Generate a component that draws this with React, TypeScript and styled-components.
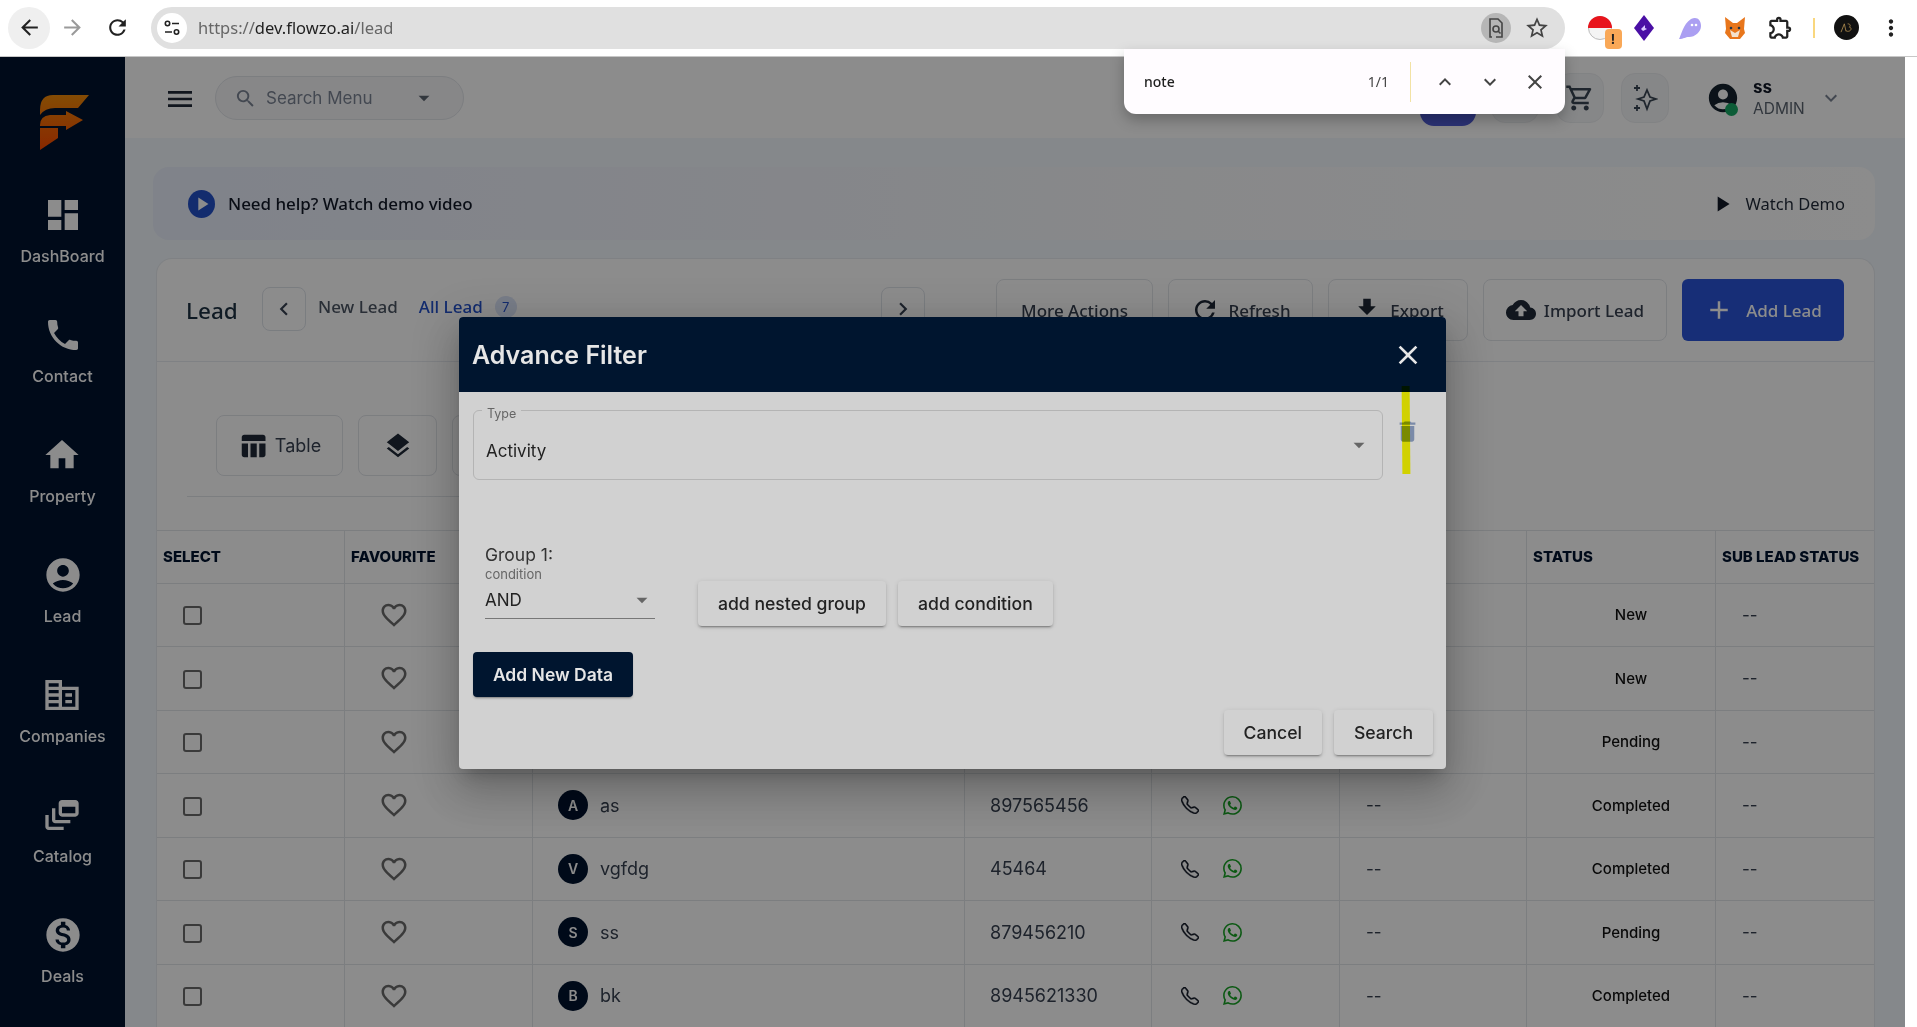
import React from "react";
import styled, { createGlobalStyle } from "styled-components";
import {
  MdAccountCircle,
  MdAdd,
  MdArrowBack,
  MdArrowDropDown,
  MdArrowForward,
  MdChevronLeft,
  MdChevronRight,
  MdClose,
  MdCloudUpload,
  MdDashboard,
  MdDelete,
  MdDynamicFeed,
  MdExpandLess,
  MdExpandMore,
  MdFavoriteBorder,
  MdFileDownload,
  MdHome,
  MdLayers,
  MdMenu,
  MdMonetizationOn,
  MdMoreVert,
  MdOutlineExtension,
  MdOutlineShoppingCart,
  MdOutlineStarBorder,
  MdPhone,
  MdPlayArrow,
  MdRefresh,
  MdSearch,
  MdTableChart,
} from "react-icons/md";
import { BsTelephone, BsWhatsapp } from "react-icons/bs";

const Global = createGlobalStyle`
  html, body {
    margin: 0;
    padding: 0;
    overflow: hidden;
    background: #fff;
  }
  * { box-sizing: border-box; }
`;

const CompanyIcon = () => (
  <svg width="1em" height="1em" viewBox="0 0 24 24" fill="currentColor">
    <path d="M12 7V3H2v18h20V7H12zM10 19H4v-2h6v2zm0-4H4v-2h6v2zm0-4H4V9h6v2zm0-4H4V5h6v2zm10 12h-8V9h8v10zm-2-8h-4v2h4v-2zm0 4h-4v2h4v-2z" />
  </svg>
);

const navItems = [
  { label: "DashBoard", icon: <MdDashboard /> },
  { label: "Contact", icon: <MdPhone /> },
  { label: "Property", icon: <MdHome /> },
  { label: "Lead", icon: <MdAccountCircle /> },
  { label: "Companies", icon: <CompanyIcon /> },
  { label: "Catalog", icon: <MdDynamicFeed /> },
  { label: "Deals", icon: <MdMonetizationOn /> },
];

const leads = [
  { status: "New" },
  { status: "New" },
  { status: "Pending" },
  { initial: "A", name: "as", phone: "897565456", status: "Completed" },
  { initial: "V", name: "vgfdg", phone: "45464", status: "Completed" },
  { initial: "S", name: "ss", phone: "879456210", status: "Pending" },
  { initial: "B", name: "bk", phone: "8945621330", status: "Completed" },
];

const Logo = () => (
  <svg width="49" height="55" viewBox="0 0 49 55">
    <defs>
      <linearGradient id="logoFill" x1="0" y1="0" x2="0" y2="1">
        <stop offset="0" stopColor="#f08a08" />
        <stop offset="1" stopColor="#fb4a00" />
      </linearGradient>
    </defs>
    <path
      fill="url(#logoFill)"
      d="M0 15Q0 0 13 0H49L38 13H15Q5 13 0 20ZM0 30Q0 21 10 20H26V16L43 25L26 35V31H0ZM0 33H18V43L0 55Z"
    />
  </svg>
);

const App: React.FC = () => {
  return (
    <Root>
      <Global />
      <Chrome>
        <BackButton>
          <MdArrowBack />
        </BackButton>
        <NavIcon $muted>
          <MdArrowForward />
        </NavIcon>
        <NavIcon>
          <MdRefresh />
        </NavIcon>
        <AddressBar>
          <SiteInfo>
            <svg width="18" height="18" viewBox="0 0 18 18" fill="none" stroke="#222" strokeWidth="1.6">
              <circle cx="4.5" cy="4.5" r="2.2" />
              <path d="M9 4.5h7M2 13h7" />
              <circle cx="13.5" cy="13" r="2.2" />
            </svg>
          </SiteInfo>
          <Url>
            https://<b>dev.flowzo.ai</b>/lead
          </Url>
          <LensButton>
            <svg width="20" height="22" viewBox="0 0 20 22" fill="none" stroke="#444" strokeWidth="1.6">
              <path d="M6 20H4V2h8l4 4v14H10" />
              <circle cx="10" cy="12" r="3" />
              <path d="M12 14l2.5 2.5" />
            </svg>
          </LensButton>
          <StarIcon>
            <MdOutlineStarBorder />
          </StarIcon>
        </AddressBar>
        <Extensions>
          <ExtSlot $shift={3}>
            <svg width="24" height="24" viewBox="0 0 24 24">
              <circle cx="12" cy="12" r="11.5" fill="#f4f4f4" stroke="#bbb" />
              <path d="M0 12a12 12 0 0 1 24 0z" fill="#e8141c" />
            </svg>
            <ExtBadge>!</ExtBadge>
          </ExtSlot>
          <ExtSlot>
            <svg width="22" height="26" viewBox="0 0 22 26">
              <path d="M11 0L21 13L11 26L1 13Z" fill="#4a0fa5" />
              <path d="M8 14l4-4v3l2 1-4 2z" fill="#d9c8ff" />
            </svg>
          </ExtSlot>
          <ExtSlot>
            <svg width="24" height="24" viewBox="0 0 24 24">
              <path d="M1 23C3 20 5 8 13 3c6-3 10 1 10 7 0 6-6 11-12 11-4 0-5 2-10 2z" fill="#ab9ff2" />
              <circle cx="14" cy="9" r="1.3" fill="#fff" />
              <circle cx="18" cy="9" r="1.3" fill="#fff" />
            </svg>
          </ExtSlot>
          <ExtSlot>
            <svg width="22" height="24" viewBox="0 0 22 24">
              <path d="M1 1L9 7h4l8-6-1 12 1 4-5 6H6l-5-6 1-4z" fill="#e8761c" />
              <path d="M6 14l5 3 5-3-2 7H8z" fill="#f4e1cc" />
              <circle cx="7" cy="12" r="1.3" fill="#233447" />
              <circle cx="15" cy="12" r="1.3" fill="#233447" />
            </svg>
          </ExtSlot>
          <ExtSlot>
            <PuzzleIcon>
              <MdOutlineExtension />
            </PuzzleIcon>
          </ExtSlot>
          <ExtDivider />
          <ProfileDot>
            <svg width="20" height="20" viewBox="0 0 24 24" fill="none" stroke="#b08d4f" strokeWidth="1">
              <path d="M6 17L10 7l2 9M14 7c3 0 4 2 2 4 3 0 3 5-2 5-1 0-2-1-2-1" />
            </svg>
          </ProfileDot>
          <DotsIcon>
            <MdMoreVert />
          </DotsIcon>
        </Extensions>
      </Chrome>

      <Viewport>
        <Page>
          <Sidebar>
            <LogoBox>
              <Logo />
            </LogoBox>
            {navItems.map((item) => (
              <NavItem key={item.label}>
                {item.icon}
                <span>{item.label}</span>
              </NavItem>
            ))}
          </Sidebar>

          <Main>
            <TopBar>
              <MenuIcon>
                <MdMenu />
              </MenuIcon>
              <SearchPill>
                <MdSearch />
                <span>Search Menu</span>
                <MdArrowDropDown />
              </SearchPill>
              <TopActions>
                <BlueChip />
                <SquareButton />
                <SquareButton>
                  <MdOutlineShoppingCart />
                </SquareButton>
                <SquareButton>
                  <svg width="26" height="30" viewBox="0 0 26 30" fill="none" stroke="#3a4654" strokeWidth="1.8">
                    <path d="M15 7l3 7 6 2-6 2-3 8-3-8-6-2 6-2z" />
                    <path d="M5 2v6M2 5h6M5 22v6M2 25h6" />
                  </svg>
                </SquareButton>
                <UserBox>
                  <UserAvatar>
                    <MdAccountCircle />
                    <OnlineDot />
                  </UserAvatar>
                  <UserText>
                    <strong>ss</strong>
                    <span>ADMIN</span>
                  </UserText>
                  <MdExpandMore />
                </UserBox>
              </TopActions>
            </TopBar>

            <Content>
              <Banner>
                <BannerLeft>
                  <PlayCircle>
                    <MdPlayArrow />
                  </PlayCircle>
                  Need help? Watch demo video
                </BannerLeft>
                <WatchDemo>
                  <MdPlayArrow />
                  Watch Demo
                </WatchDemo>
              </Banner>

              <Card>
                <CardHeader>
                  <CardTitle>Lead</CardTitle>
                  <PagerButton>
                    <MdChevronLeft />
                  </PagerButton>
                  <Tabs>
                    <Tab>New Lead</Tab>
                    <Tab $active>All Lead</Tab>
                    <TabCount>7</TabCount>
                  </Tabs>
                  <PagerButton>
                    <MdChevronRight />
                  </PagerButton>
                  <Actions>
                    <ActionButton $width={157}>More Actions</ActionButton>
                    <ActionButton $width={145}>
                      <MdRefresh />
                      Refresh
                    </ActionButton>
                    <ActionButton $width={140}>
                      <MdFileDownload />
                      Export
                    </ActionButton>
                    <ActionButton $width={184}>
                      <MdCloudUpload />
                      Import Lead
                    </ActionButton>
                    <PrimaryButton>
                      <MdAdd />
                      Add Lead
                    </PrimaryButton>
                  </Actions>
                </CardHeader>

                <ViewZone>
                  <ViewButtons>
                    <ViewButton $width={127}>
                      <MdTableChart />
                      Table
                    </ViewButton>
                    <ViewButton $width={79}>
                      <MdLayers />
                    </ViewButton>
                    <ViewButton $width={79} />
                  </ViewButtons>
                  <ViewDivider />
                </ViewZone>

                <HeadRow>
                  <HeadCell>Select</HeadCell>
                  <HeadCell>Favourite</HeadCell>
                  <HeadCell />
                  <HeadCell />
                  <HeadCell />
                  <HeadCell />
                  <HeadCell>Status</HeadCell>
                  <HeadCell>Sub Lead Status</HeadCell>
                </HeadRow>
                {leads.map((lead, i) => (
                  <Row key={i}>
                    <CenterCell>
                      <CheckBox />
                    </CenterCell>
                    <CenterCell>
                      <HeartIcon>
                        <MdFavoriteBorder />
                      </HeartIcon>
                    </CenterCell>
                    <NameCell>
                      {lead.name && (
                        <>
                          <Initial>{lead.initial}</Initial>
                          {lead.name}
                        </>
                      )}
                    </NameCell>
                    <PhoneCell>{lead.phone}</PhoneCell>
                    <ContactCell>
                      {lead.name && (
                        <>
                          <BsTelephone />
                          <WhatsApp>
                            <BsWhatsapp />
                          </WhatsApp>
                        </>
                      )}
                    </ContactCell>
                    <DashCell>{lead.name && "--"}</DashCell>
                    <StatusCell>{lead.status}</StatusCell>
                    <DashCell>--</DashCell>
                  </Row>
                ))}
              </Card>
            </Content>
          </Main>

          <Overlay />

          <Dialog>
            <DialogHeader>
              Advance Filter
              <MdClose />
            </DialogHeader>
            <DialogBody>
              <TypeRow>
                <TypeField>
                  <TypeLabel>Type</TypeLabel>
                  Activity
                  <MdArrowDropDown />
                </TypeField>
                <TrashIcon>
                  <MdDelete />
                </TrashIcon>
              </TypeRow>
              <GroupRow>
                <GroupColumn>
                  <GroupLabel>Group 1:</GroupLabel>
                  <ConditionLabel>condition</ConditionLabel>
                  <ConditionSelect>
                    AND
                    <MdArrowDropDown />
                  </ConditionSelect>
                </GroupColumn>
                <GroupButtons>
                  <RaisedButton>add nested group</RaisedButton>
                  <RaisedButton>add condition</RaisedButton>
                </GroupButtons>
              </GroupRow>
              <DarkButton>Add New Data</DarkButton>
              <DialogFooter>
                <RaisedButton>Cancel</RaisedButton>
                <RaisedButton>Search</RaisedButton>
              </DialogFooter>
            </DialogBody>
            <FindHighlight />
          </Dialog>
        </Page>
        <Scrollbar />
      </Viewport>

      <FindBar>
        <FindText>note</FindText>
        <FindCount>1/1</FindCount>
        <FindDivider />
        <FindIcon>
          <MdExpandLess />
        </FindIcon>
        <FindIcon>
          <MdExpandMore />
        </FindIcon>
        <FindIcon>
          <MdClose />
        </FindIcon>
      </FindBar>
    </Root>
  );
};

export default App;

const Root = styled.div`
  position: relative;
  width: 1917px;
  height: 1027px;
  overflow: hidden;
  display: flex;
  flex-direction: column;
  font-family: "Inter", "Liberation Sans", sans-serif;
`;

/* browser chrome */
const Chrome = styled.div`
  height: 57px;
  flex: none;
  display: flex;
  align-items: center;
  padding: 0 0 1px 8px;
  background: #fff;
  border-bottom: 1px solid #c7c7c7;
`;
const BackButton = styled.div`
  width: 42px;
  height: 42px;
  border-radius: 50%;
  background: #efefef;
  display: flex;
  align-items: center;
  justify-content: center;
  font-size: 25px;
  color: #222;
`;
const NavIcon = styled.div<{ $muted?: boolean }>`
  width: 45px;
  display: flex;
  justify-content: center;
  font-size: 25px;
  color: ${(p) => (p.$muted ? "#9a9a9a" : "#222")};
`;
const AddressBar = styled.div`
  width: 1414px;
  height: 42px;
  margin-left: 11px;
  padding: 0 15px 0 6px;
  border-radius: 21px;
  background: #e0e0e0;
  display: flex;
  align-items: center;
`;
const SiteInfo = styled.div`
  width: 30px;
  height: 30px;
  border-radius: 50%;
  background: #fff;
  display: flex;
  align-items: center;
  justify-content: center;
`;
const Url = styled.div`
  margin-left: 11px;
  flex: 1;
  font-family: "Noto Sans", sans-serif;
  font-size: 16.5px;
  color: #666;
  b {
    font-weight: 400;
    color: #1f1f1f;
  }
`;
const LensButton = styled.div`
  width: 30px;
  height: 30px;
  border-radius: 50%;
  background: #b6b6b6;
  display: flex;
  align-items: center;
  justify-content: center;
`;
const StarIcon = styled.div`
  width: 26px;
  margin-left: 13px;
  font-size: 26px;
  display: flex;
  color: #444;
`;
const Extensions = styled.div`
  flex: 1;
  display: flex;
  align-items: center;
  padding-left: 11px;
`;
const ExtSlot = styled.div<{ $shift?: number }>`
  position: relative;
  width: 45.5px;
  height: 30px;
  display: flex;
  align-items: center;
  justify-content: center;
  padding-left: ${(p) => p.$shift ?? 0}px;
`;
const ExtBadge = styled.div`
  position: absolute;
  right: 0;
  bottom: -6px;
  width: 17px;
  height: 20px;
  border-radius: 4px;
  background: #f9a857;
  color: #222;
  font-size: 13px;
  font-weight: 700;
  text-align: center;
  line-height: 20px;
`;
const PuzzleIcon = styled.div`
  font-size: 27px;
  display: flex;
  color: #222;
`;
const ExtDivider = styled.div`
  width: 2px;
  height: 20px;
  margin: 0 19px 0 9px;
  background: #f9d77e;
`;
const ProfileDot = styled.div`
  width: 25px;
  height: 25px;
  border-radius: 50%;
  background: #111;
  display: flex;
  align-items: center;
  justify-content: center;
`;
const DotsIcon = styled.div`
  margin-left: 19px;
  font-size: 26px;
  display: flex;
  color: #222;
`;

/* find in page */
const FindBar = styled.div`
  position: absolute;
  left: 1124px;
  top: 49px;
  width: 441px;
  height: 65px;
  padding: 0 8px 0 20px;
  border-radius: 0 0 12px 12px;
  background: #fffcff;
  box-shadow: 0 6px 14px rgba(0, 0, 0, 0.25);
  display: flex;
  align-items: center;
  font-family: "Noto Sans", sans-serif;
`;
const FindText = styled.div`
  flex: 1;
  font-size: 14px;
  font-weight: 500;
  color: #1f1f1f;
`;
const FindCount = styled.div`
  font-size: 14px;
  color: #444;
  margin-right: 21px;
`;
const FindDivider = styled.div`
  width: 1px;
  height: 40px;
  margin-right: 11px;
  background: #f2e2a4;
`;
const FindIcon = styled.div`
  width: 45px;
  display: flex;
  justify-content: center;
  font-size: 24px;
  color: #444;
`;

/* page */
const Viewport = styled.div`
  flex: 1;
  display: flex;
  min-height: 0;
`;
const Scrollbar = styled.div`
  width: 12px;
  flex: none;
  background: #fff;
`;
const Page = styled.div`
  position: relative;
  flex: 1;
  display: flex;
  overflow: hidden;
  background: #f2f7fd;
`;
const Sidebar = styled.nav`
  width: 125px;
  flex: none;
  background: #00132f;
  display: flex;
  flex-direction: column;
  align-items: center;
`;
const LogoBox = styled.div`
  height: 55px;
  margin: 38px 0 45px 4px;
`;
const NavItem = styled.div`
  height: 120px;
  flex: none;
  display: flex;
  flex-direction: column;
  align-items: center;
  color: #fff;
  font-size: 16px;
  font-weight: 500;
  svg {
    font-size: 40px;
  }
  span {
    margin-top: 10px;
    line-height: 22px;
  }
`;
const Main = styled.div`
  flex: 1;
  min-width: 0;
  display: flex;
  flex-direction: column;
`;
const TopBar = styled.header`
  height: 81px;
  flex: none;
  display: flex;
  align-items: center;
  padding-left: 39px;
  background: #fff;
`;
const MenuIcon = styled.div`
  font-size: 32px;
  display: flex;
  color: #1f2937;
  margin-top: 2px;
`;
const SearchPill = styled.div`
  width: 249px;
  height: 44px;
  margin: 1px 0 0 19px;
  padding: 0 10px 0 18px;
  border-radius: 22px;
  background: #f6f6f8;
  border: 1px solid #e2e5ea;
  display: flex;
  align-items: center;
  font-size: 17px;
  color: #7b8494;
  svg {
    font-size: 23px;
    flex: none;
  }
  span {
    flex: 1;
    margin-left: 9px;
  }
  svg:last-child {
    font-size: 26px;
    color: #5b6470;
    margin-right: 16px;
  }
`;
const TopActions = styled.div`
  margin-left: auto;
  display: flex;
  align-items: center;
`;
const BlueChip = styled.div`
  width: 56px;
  height: 50px;
  margin: 6px 15px 0 0;
  border-radius: 14px;
  background: #4f5bd5;
`;
const SquareButton = styled.div`
  width: 48px;
  height: 50px;
  margin-right: 17px;
  border-radius: 14px;
  background: #f5f6f8;
  border: 1px solid #eceef1;
  display: flex;
  align-items: center;
  justify-content: center;
  font-size: 30px;
  color: #3a4654;
`;
const UserBox = styled.div`
  width: 219px;
  padding-left: 23px;
  display: flex;
  align-items: center;
  color: #7b8494;
  font-size: 24px;
`;
const UserAvatar = styled.div`
  position: relative;
  width: 28px;
  height: 36px;
  font-size: 34px;
  color: #14222e;
  display: flex;
  align-items: center;
  justify-content: center;
  svg {
    flex: none;
  }
`;
const OnlineDot = styled.div`
  position: absolute;
  right: -1px;
  bottom: 0;
  width: 13px;
  height: 13px;
  border-radius: 50%;
  background: #17a864;
`;
const UserText = styled.div`
  margin: 0 14px 0 16px;
  display: flex;
  flex-direction: column;
  strong {
    font-size: 17px;
    line-height: 21px;
    color: #111827;
  }
  span {
    font-size: 15.5px;
    line-height: 21px;
    color: #5b6470;
  }
`;
const Content = styled.div`
  flex: 1;
  min-height: 0;
  padding: 29px 30px 0 28px;
  display: flex;
  flex-direction: column;
  gap: 18px;
`;
const Banner = styled.div`
  height: 73px;
  flex: none;
  padding: 0 30px 0 35px;
  border-radius: 16px;
  background: linear-gradient(90deg, #e9eefb, #f8f9fc 60%, #fff);
  display: flex;
  align-items: center;
  justify-content: space-between;
  font-family: "Noto Sans", sans-serif;
  color: #111827;
`;
const BannerLeft = styled.div`
  display: flex;
  align-items: center;
  gap: 13px;
  font-size: 17px;
  font-weight: 500;
  letter-spacing: -0.05px;
`;
const PlayCircle = styled.div`
  width: 27px;
  height: 28px;
  border-radius: 50%;
  background: #2451c9;
  color: #fff;
  display: flex;
  align-items: center;
  justify-content: center;
  font-size: 22px;
`;
const WatchDemo = styled.div`
  display: flex;
  align-items: center;
  gap: 11px;
  font-size: 16.5px;
  color: #1f2937;
  svg {
    font-size: 26px;
    color: #111827;
  }
`;
const Card = styled.section`
  flex: 1;
  margin-left: 3px;
  border: 1px solid #e7ebf0;
  border-bottom: 0;
  border-radius: 16px 16px 0 0;
  background: #fff;
  overflow: hidden;
`;
const CardHeader = styled.div`
  height: 103px;
  padding: 0 30px 0 29px;
  display: flex;
  align-items: center;
  border-bottom: 1px solid #e7ebf0;
`;
const CardTitle = styled.div`
  width: 76px;
  font-family: "Noto Sans", sans-serif;
  font-size: 22.5px;
  font-weight: 500;
  color: #1d3142;
`;
const PagerButton = styled.div`
  width: 44px;
  height: 44px;
  flex: none;
  border: 1px solid #dfe3ea;
  border-radius: 8px;
  display: flex;
  align-items: center;
  justify-content: center;
  font-size: 26px;
  color: #374151;
  margin-top: -3px;
`;
const Tabs = styled.div`
  width: 575px;
  padding-left: 12px;
  display: flex;
  align-items: center;
  margin-top: -7px;
`;
const Tab = styled.div<{ $active?: boolean }>`
  margin-right: 21px;
  font-family: "Noto Sans", sans-serif;
  font-size: 17px;
  font-weight: 500;
  color: ${(p) => (p.$active ? "#2451c9" : "#4b5563")};
`;
const TabCount = styled.div`
  width: 22px;
  height: 22px;
  margin-left: -9px;
  border-radius: 50%;
  background: #dbe3f7;
  color: #2451c9;
  font-size: 13px;
  text-align: center;
  line-height: 22px;
`;
const Actions = styled.div`
  margin-left: 71px;
  display: flex;
  align-items: center;
  gap: 15px;
`;
const ActionButton = styled.div<{ $width: number }>`
  width: ${(p) => p.$width}px;
  height: 62px;
  border: 1px solid #e2e5ea;
  border-radius: 8px;
  display: flex;
  align-items: center;
  justify-content: center;
  gap: 8px;
  font-family: "Noto Sans", sans-serif;
  font-size: 17px;
  font-weight: 500;
  color: #374151;
  svg {
    font-size: 30px;
    color: #1f2937;
  }
`;
const PrimaryButton = styled.div`
  width: 162px;
  height: 62px;
  border-radius: 6px;
  background: #2a55d9;
  display: flex;
  align-items: center;
  justify-content: center;
  gap: 12px;
  font-family: "Noto Sans", sans-serif;
  font-size: 17px;
  font-weight: 500;
  color: #fff;
  svg {
    font-size: 30px;
  }
`;
const ViewZone = styled.div`
  height: 168px;
  padding: 53px 0 0 30px;
`;
const ViewButtons = styled.div`
  display: flex;
  gap: 15px;
  padding-left: 29px;
`;
const ViewButton = styled.div<{ $width: number }>`
  width: ${(p) => p.$width}px;
  height: 61px;
  border: 1px solid #e2e5ea;
  border-radius: 8px;
  display: flex;
  align-items: center;
  justify-content: center;
  gap: 7px;
  font-size: 18px;
  color: #374151;
  svg {
    font-size: 30px;
    color: #1f2937;
  }
`;
const ViewDivider = styled.div`
  width: 1000px;
  height: 1px;
  margin-top: 20px;
  background: #e2e5ea;
`;

const columns = "188px 188px 432px 187px 188px 187px 189px 1fr";

const HeadRow = styled.div`
  display: grid;
  grid-template-columns: ${columns};
  height: 53.5px;
  border-top: 1px solid #e2e5ea;
  border-bottom: 1px solid #e2e5ea;
`;
const HeadCell = styled.div`
  padding-left: 6px;
  display: flex;
  align-items: center;
  border-right: 1px solid #e2e5ea;
  font-size: 15px;
  font-weight: 800;
  text-transform: uppercase;
  color: #00132f;
  &:last-child {
    border-right: 0;
  }
`;
const Row = styled.div`
  display: grid;
  grid-template-columns: ${columns};
  height: 63.5px;
  border-bottom: 1px solid #e2e5ea;
`;
const BodyCell = styled.div`
  display: flex;
  align-items: center;
  border-right: 1px solid #e2e5ea;
  font-size: 18px;
  color: #374151;
  &:last-child {
    border-right: 0;
  }
`;
const CenterCell = styled(BodyCell)`
  padding-left: 26px;
  &:nth-child(2) {
    padding-left: 34px;
  }
`;
const CheckBox = styled.div`
  width: 19px;
  height: 19px;
  margin-top: 2px;
  border: 2px solid #6b6b6b;
  border-radius: 3px;
`;
const HeartIcon = styled.div`
  font-size: 30px;
  display: flex;
  color: #6b6b6b;
`;
const NameCell = styled(BodyCell)`
  padding-left: 25px;
  gap: 12px;
`;
const Initial = styled.div`
  width: 30px;
  height: 30px;
  border-radius: 50%;
  background: #00132f;
  color: #fff;
  font-size: 14px;
  font-weight: 600;
  display: flex;
  align-items: center;
  justify-content: center;
`;
const PhoneCell = styled(BodyCell)`
  padding-left: 25px;
`;
const ContactCell = styled(BodyCell)`
  padding-left: 29px;
  gap: 24px;
  svg {
    font-size: 18px;
    color: #111827;
    stroke: currentColor;
    stroke-width: 0.4;
  }
`;
const WhatsApp = styled.div`
  display: flex;
  svg {
    font-size: 19px;
    color: #17a324;
    stroke-width: 0;
  }
`;
const DashCell = styled(BodyCell)`
  padding-left: 26px;
  font-size: 17px;
`;
const StatusCell = styled(BodyCell)`
  justify-content: center;
  padding-left: 20px;
  font-size: 15px;
  font-weight: 500;
  color: #111;
`;

const Overlay = styled.div`
  position: absolute;
  inset: 0;
  background: rgba(0, 0, 0, 0.45);
`;

/* dialog */
const Dialog = styled.div`
  position: absolute;
  left: 459px;
  top: 260px;
  width: 987px;
  height: 452px;
  border-radius: 4px;
  background: #d1d1d1;
  box-shadow: 0 11px 15px -7px rgba(0, 0, 0, 0.2), 0 24px 38px 3px rgba(0, 0, 0, 0.14),
    0 9px 46px 8px rgba(0, 0, 0, 0.12);
`;
const DialogHeader = styled.div`
  height: 75px;
  padding: 0 22px 0 13px;
  border-radius: 4px 4px 0 0;
  background: #00152f;
  display: flex;
  align-items: center;
  justify-content: space-between;
  font-size: 25px;
  font-weight: 600;
  color: #e6e6e6;
  svg {
    font-size: 32px;
  }
`;
const DialogBody = styled.div`
  padding: 18px 14px 0;
`;
const TypeRow = styled.div`
  display: flex;
  align-items: flex-start;
`;
const TypeField = styled.div`
  position: relative;
  width: 910px;
  height: 70px;
  padding: 12px 10px 0 12px;
  border: 1px solid #b4b4b4;
  border-radius: 6px;
  display: flex;
  align-items: center;
  justify-content: space-between;
  font-size: 17px;
  color: #222;
  svg {
    font-size: 26px;
    color: #666;
    margin-top: -12px;
  }
`;
const TypeLabel = styled.div`
  position: absolute;
  left: 8px;
  top: -5px;
  padding: 0 5px;
  background: #d1d1d1;
  font-size: 12.5px;
  color: #666;
`;
const TrashIcon = styled.div`
  margin: 8px 0 0 11px;
  font-size: 27px;
  display: flex;
  color: #7a8aa8;
`;
const GroupRow = styled.div`
  margin-top: 64px;
  padding-left: 12px;
  display: flex;
  align-items: flex-start;
`;
const GroupColumn = styled.div`
  width: 170px;
  display: flex;
  flex-direction: column;
`;
const GroupLabel = styled.div`
  font-size: 17.5px;
  line-height: 22px;
  color: #333;
`;
const ConditionLabel = styled.div`
  font-size: 13px;
  line-height: 17px;
  color: #666;
`;
const ConditionSelect = styled.div`
  height: 36px;
  padding-bottom: 2px;
  display: flex;
  align-items: center;
  justify-content: space-between;
  border-bottom: 1px solid #777;
  font-size: 17px;
  color: #222;
  svg {
    font-size: 26px;
    color: #666;
  }
`;
const GroupButtons = styled.div`
  margin: 37px 0 0 43px;
  display: flex;
  gap: 12px;
`;
const RaisedButton = styled.div`
  height: 45px;
  padding: 0 20px;
  border-radius: 4px;
  background: #d1d1d1;
  box-shadow: 0 3px 1px -2px rgba(0, 0, 0, 0.2), 0 2px 2px rgba(0, 0, 0, 0.14), 0 1px 5px rgba(0, 0, 0, 0.12);
  display: flex;
  align-items: center;
  font-size: 17.6px;
  font-weight: 500;
  color: #222;
`;
const DarkButton = styled.div`
  width: 160px;
  height: 45px;
  margin-top: 26px;
  border-radius: 4px;
  background: #00152f;
  box-shadow: 0 3px 1px -2px rgba(0, 0, 0, 0.2), 0 2px 2px rgba(0, 0, 0, 0.14);
  display: flex;
  align-items: center;
  justify-content: center;
  font-size: 17.5px;
  font-weight: 600;
  color: #e6e6e6;
`;
const DialogFooter = styled.div`
  margin: 13px -1px 0 0;
  display: flex;
  justify-content: flex-end;
  gap: 12px;
`;
const FindHighlight = styled.div`
  position: absolute;
  left: 943px;
  top: 69px;
  width: 8px;
  height: 88px;
  background: #ffff00;
  mix-blend-mode: multiply;
  transform: rotate(-0.5deg);
`;
